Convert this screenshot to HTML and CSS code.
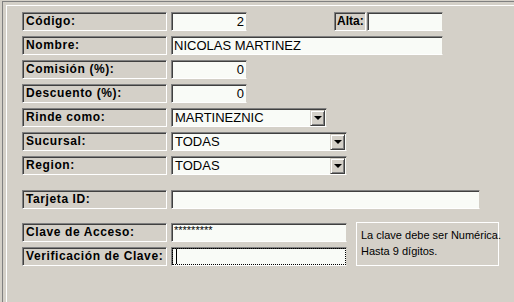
FILE: index.html
```html
<!DOCTYPE html>
<html>
<head>
<meta charset="UTF-8">
<title>Vendedor</title>
<link rel="stylesheet" href="styles.css">
</head>
<body>
	<div id="frame">
	<div id="panel">

		<div class="row">
			<label class="title">Código:</label>
			<input type="text" class="field num short" value="2" readonly />
			<label class="title alta">Alta:</label>
			<input type="text" class="field alta-field" value="" readonly />
		</div>

		<div class="row">
			<label class="title">Nombre:</label>
			<input type="text" class="field wide" value="NICOLAS MARTINEZ" readonly />
		</div>

		<div class="row">
			<label class="title">Comisión (%):</label>
			<input type="text" class="field num short" value="0" readonly />
		</div>

		<div class="row">
			<label class="title">Descuento (%):</label>
			<input type="text" class="field num short" value="0" readonly />
		</div>

		<div class="row">
			<label class="title">Rinde como:</label>
			<div class="combo small">
				<span class="combo-text">MARTINEZNIC</span>
				<span class="combo-btn"><span class="arrow"></span></span>
			</div>
		</div>

		<div class="row">
			<label class="title">Sucursal:</label>
			<div class="combo medium">
				<span class="combo-text">TODAS</span>
				<span class="combo-btn"><span class="arrow"></span></span>
			</div>
		</div>

		<div class="row">
			<label class="title">Region:</label>
			<div class="combo medium">
				<span class="combo-text">TODAS</span>
				<span class="combo-btn"><span class="arrow"></span></span>
			</div>
		</div>

		<div class="row gap-before">
			<label class="title">Tarjeta ID:</label>
			<input type="text" class="field long" value="" readonly />
		</div>

		<div class="clave">
			<div class="clave-rows">
				<div class="row">
					<label class="title">Clave de Acceso:</label>
					<input type="text" class="field medium pass" value="*********" readonly />
				</div>
				<div class="row">
					<label class="title">Verificación de Clave:</label>
					<div class="field medium focused"><span class="caret"></span></div>
				</div>
			</div>
			<div class="hint">La clave debe ser Numérica.<br>Hasta 9 dígitos.</div>
		</div>

	</div>
	</div>
</body>
</html>
```

FILE: styles.css
```css
html, body {
	height: 100%;
}

body {
	margin: 0;
	padding: 0;
	background-color: #d4d0c8;
	font-family: "Liberation Sans", Arial, sans-serif;
	overflow: hidden;
}

#frame {
	box-sizing: border-box;
	height: calc(100% - 1px);
	margin: 1px 0 0 2px;
	border-top: 1px solid #808080;
	border-left: 1px solid #808080;
	padding: 3px 0 0 3px;
}

#panel {
	box-sizing: border-box;
	height: 100%;
	border-top: 1px solid #fff;
	border-left: 1px solid #fff;
	padding: 6px 0 0 15px;
}

.row {
	display: flex;
	align-items: center;
	height: 19px;
	margin-bottom: 5px;
}

.row.gap-before {
	margin-top: 15px;
}

/* caja de etiqueta hundida */
label.title {
	box-sizing: border-box;
	display: block;
	flex: none;
	width: 145px;
	height: 19px;
	margin-right: 4px;
	padding: 0 0 0 3px;
	border-top: 1px solid #808080;
	border-left: 1px solid #808080;
	border-bottom: 1px solid #fff;
	border-right: 1px solid #fff;
	box-shadow: inset 1px 1px 0 #404040;
	font-size: 12px;
	font-weight: bold;
	letter-spacing: 0.6px;
	line-height: 17px;
	color: #000;
	white-space: nowrap;
}

label.title.alta {
	width: 32px;
	margin: 0 1px 0 87px;
	padding-left: 2px;
	letter-spacing: 0;
}

.field {
	box-sizing: border-box;
	flex: none;
	height: 19px;
	margin: 0;
	padding: 0 2px 0 2px;
	border-top: 1px solid #808080;
	border-left: 1px solid #808080;
	border-bottom: 1px solid #fff;
	border-right: 1px solid #d4d0c8;
	box-shadow: inset 1px 1px 0 #404040;
	background-color: #f9fbf7;
	font-family: "Liberation Sans", Arial, sans-serif;
	font-size: 13px;
	color: #000;
	outline: none;
}

.field.num {
	text-align: right;
}

.field.short {
	width: 76px;
}

.field.alta-field {
	width: 76px;
}

.field.wide {
	width: 272px;
}

.field.medium {
	width: 176px;
}

.field.long {
	width: 309px;
}

.field.pass {
	font-size: 11px;
	line-height: 11px;
	padding-bottom: 6px;
}

.field.focused {
	position: relative;
	outline: 1px dotted #000;
	outline-offset: -2px;
}

.caret {
	position: absolute;
	left: 4px;
	top: 1px;
	width: 1px;
	height: 15px;
	background-color: #000;
}

/* combo */
.combo {
	box-sizing: border-box;
	display: flex;
	flex: none;
	height: 19px;
	border-top: 1px solid #808080;
	border-left: 1px solid #808080;
	border-bottom: 1px solid #fff;
	border-right: 1px solid #d4d0c8;
	box-shadow: inset 1px 1px 0 #404040;
	background-color: #f9fbf7;
	padding: 1px 1px 0 1px;
}

.combo.small {
	width: 156px;
}

.combo.medium {
	width: 176px;
}

.combo-text {
	flex: 1;
	padding-left: 2px;
	font-size: 13px;
	line-height: 16px;
}

.combo-btn {
	box-sizing: border-box;
	display: flex;
	align-items: center;
	justify-content: center;
	width: 15px;
	height: 16px;
	background-color: #d4d0c8;
	border-top: 1px solid #d4d0c8;
	border-left: 1px solid #d4d0c8;
	border-bottom: 1px solid #404040;
	border-right: 1px solid #404040;
	box-shadow: inset 1px 1px 0 #fff, inset -1px -1px 0 #808080;
}

.arrow {
	width: 0;
	height: 0;
	border-left: 4px solid transparent;
	border-right: 4px solid transparent;
	border-top: 4px solid #000;
}

/* clave */
.clave {
	display: flex;
	align-items: flex-start;
	margin-top: 14px;
}

.clave-rows {
	flex: none;
}

.hint {
	box-sizing: border-box;
	flex: none;
	width: 143px;
	height: 44px;
	margin: -1px 0 0 9px;
	padding: 4px 0 0 4px;
	border: 1px solid #fff;
	font-size: 11px;
	line-height: 16px;
	color: #000;
	white-space: nowrap;
}
```
